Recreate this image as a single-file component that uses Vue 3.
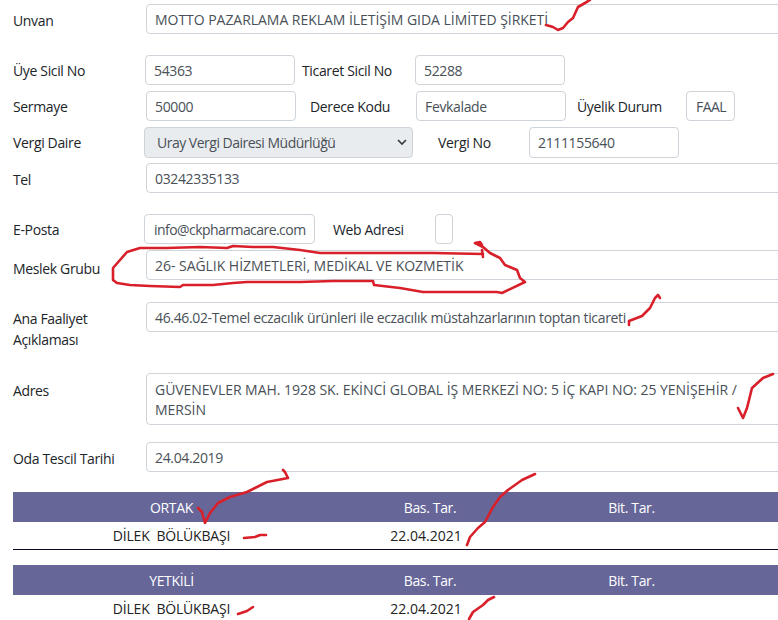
<template>
  <div class="page">
    <div class="row mt4 h30">
      <label class="lbl w133 low2">Unvan</label>
      <div class="field grow caps">MOTTO PAZARLAMA REKLAM İLETİŞİM GIDA LİMİTED ŞİRKETİ</div>
    </div>
    <div class="row mt21 h30">
      <label class="lbl w132">Üye Sicil No</label>
      <div class="field w150">54363</div>
      <label class="lbl w120 pl7">Ticaret Sicil No</label>
      <div class="field w150">52288</div>
    </div>
    <div class="row mt6 h30">
      <label class="lbl w133">Sermaye</label>
      <div class="field w150">50000</div>
      <label class="lbl w120 pl14">Derece Kodu</label>
      <div class="field w150">Fevkalade</div>
      <label class="lbl w120 pl11">Üyelik Durum</label>
      <div class="field w49 tight">FAAL</div>
    </div>
    <div class="row mt6 h31">
      <label class="lbl w131">Vergi Daire</label>
      <div class="select">
        <span>Uray Vergi Dairesi Müdürlüğü</span>
        <svg width="10" height="7" viewBox="0 0 10 7"><path d="M1 1l4 4 4-4" fill="none" stroke="#343a40" stroke-width="1.6"/></svg>
      </div>
      <label class="lbl w116 pl25">Vergi No</label>
      <div class="field w150">2111155640</div>
    </div>
    <div class="row mt5 h30">
      <label class="lbl w133 low2">Tel</label>
      <div class="field grow">03242335133</div>
    </div>
    <div class="row mt21 h30">
      <label class="lbl w131">E-Posta</label>
      <div class="field w171 tight">info@ckpharmacare.com</div>
      <label class="lbl w120 pl18">Web Adresi</label>
      <div class="field w18"></div>
    </div>
    <div class="row mt6 h30">
      <label class="lbl w133 low6">Meslek Grubu</label>
      <div class="field grow caps">26- SAĞLIK HİZMETLERİ, MEDİKAL VE KOZMETİK</div>
    </div>
    <div class="row mt22 top">
      <label class="lbl w133 two">Ana Faaliyet Açıklaması</label>
      <div class="field grow h30">46.46.02-Temel eczacılık ürünleri ile eczacılık müstahzarlarının toptan ticareti</div>
    </div>
    <div class="row mt23 h52 top">
      <label class="lbl w133 adres">Adres</label>
      <div class="field grow area caps">GÜVENEVLER MAH. 1928 SK. EKİNCİ GLOBAL İŞ MERKEZİ NO: 5 İÇ KAPI NO: 25 YENİŞEHİR / MERSİN</div>
    </div>
    <div class="row mt17 h30">
      <label class="lbl w133 low3">Oda Tescil Tarihi</label>
      <div class="field grow">24.04.2019</div>
    </div>
    <section v-for="t in tables" :key="t.title" class="table" :class="t.cls">
      <div class="thead">
        <span>{{ t.title }}</span><span>Bas. Tar.</span><span>Bit. Tar.</span>
      </div>
      <div class="tbody">
        <span>DİLEK&nbsp; BÖLÜKBAŞI</span><span class="date">22.04.2021</span><span></span>
      </div>
    </section>
    <svg class="ink" width="778" height="620" viewBox="0 0 778 620" fill="none" stroke="#d9202a" stroke-width="2.6" stroke-linecap="round" stroke-linejoin="round">
      <path d="M546 25L553 27L558 30L563 28L568 22L573 18L578 7L585 3L590 0"/>
      <path d="M482 250L483 257M483 254L433 253L383 253L320 253L300 250L273 247L253 247L233 246L227 248L200 247L167 248L140 248L127 252L120 260L113 268L113 280L117 283L130 285L150 286L180 287L183 285L213 285L233 283L247 282L300 282L333 281L373 281L374 285L400 288L423 292L467 292L497 292L502 293L525 282L520 278L517 270L505 265L500 258L490 253L483 247L475 243L480 242L482 245"/>
      <path d="M629 325L629 321L642 316L650 308L655 298L658 295L660 298"/>
      <path d="M738 408L743 418L747 408L752 388L763 378L773 374"/>
      <path d="M198 508L202 512L205 523L210 513L218 503L230 497L247 492L267 482L288 478L285 472L283 470"/>
      <path d="M244 538L255 537L260 535L266 535"/>
      <path d="M467 545L470 537L478 528L485 522L493 507L500 497L508 490L522 480L535 474"/>
      <path d="M238 614L247 611L253 607"/>
      <path d="M469 619L473 612L483 605L488 600L494 597"/>
    </svg>
  </div>
</template>

<script setup>
const tables = [
  { title: 'ORTAK', cls: 't1' },
  { title: 'YETKİLİ', cls: 't2' }
]
</script>

<style>
html, body { margin: 0; overflow: hidden; background: #fff; }
</style>
<style scoped>
.page { position: relative; width: 778px; height: 620px; overflow: hidden; padding: 0 0 0 13px; box-sizing: border-box; background: #fff; font-family: "Open Sans", "Noto Sans", sans-serif; font-size: 14px; color: #212529; letter-spacing: -0.35px; }
.ink { position: absolute; top: 0; left: 0; pointer-events: none; }
.row { display: flex; align-items: center; width: 800px; }
.row.top { align-items: flex-start; }
.h30 { height: 30px; }
.h31 { height: 31px; }
.h52 { height: 52px; }
.mt4 { margin-top: 4px; }
.mt5 { margin-top: 5px; }
.mt6 { margin-top: 6px; }
.mt17 { margin-top: 17px; }
.mt21 { margin-top: 21px; }
.mt22 { margin-top: 22px; }
.mt23 { margin-top: 23px; }
.lbl { box-sizing: border-box; flex: none; }
.low2 { padding-top: 2px; }
.low3 { padding-top: 3px; }
.low6 { padding-top: 6px; }
.w131 { width: 131px; }
.w132 { width: 132px; }
.w133 { width: 133px; }
.w116 { width: 116px; }
.w120 { width: 120px; }
.pl7 { padding-left: 7px; }
.pl11 { padding-left: 11px; }
.pl14 { padding-left: 14px; }
.pl18 { padding-left: 18px; }
.pl25 { padding-left: 25px; }
.two { line-height: 21px; margin-top: 6px; }
.adres { margin-top: 8px; }
.field { box-sizing: border-box; flex: none; height: 100%; border: 1px solid #ced4da; border-radius: 4px; padding: 0 8px; display: flex; align-items: center; color: #495057; white-space: nowrap; overflow: hidden; }
.field.h30 { height: 30px; }
.caps { letter-spacing: -0.04px; }
.tight { letter-spacing: -0.55px; }
.grow { width: 660px; }
.w150 { width: 150px; }
.w171 { width: 171px; padding: 0 9px; }
.w49 { width: 49px; padding: 0 9px; }
.w18 { width: 18px; padding: 0; }
.area { white-space: normal; align-items: flex-start; padding: 6px 50px 0 8px; line-height: 20px; }
.select { box-sizing: border-box; flex: none; width: 269px; height: 100%; background: #e9ecef; border: 1px solid #ced4da; border-radius: 4px; padding: 0 5px 0 12px; display: flex; align-items: center; justify-content: space-between; color: #495057; letter-spacing: -0.5px; }
.table { width: 765px; }
.t1 { margin-top: 20px; border-bottom: 1px solid #0b0b2b; }
.t2 { margin-top: 15px; }
.thead, .tbody { display: grid; grid-template-columns: 317px 200px 203px 1fr; text-align: center; align-items: center; }
.thead { height: 30px; background: #666699; color: #fff; }
.tbody { height: 27px; color: #222; letter-spacing: -0.2px; }
.date { padding-right: 8px; letter-spacing: 0; }
</style>
